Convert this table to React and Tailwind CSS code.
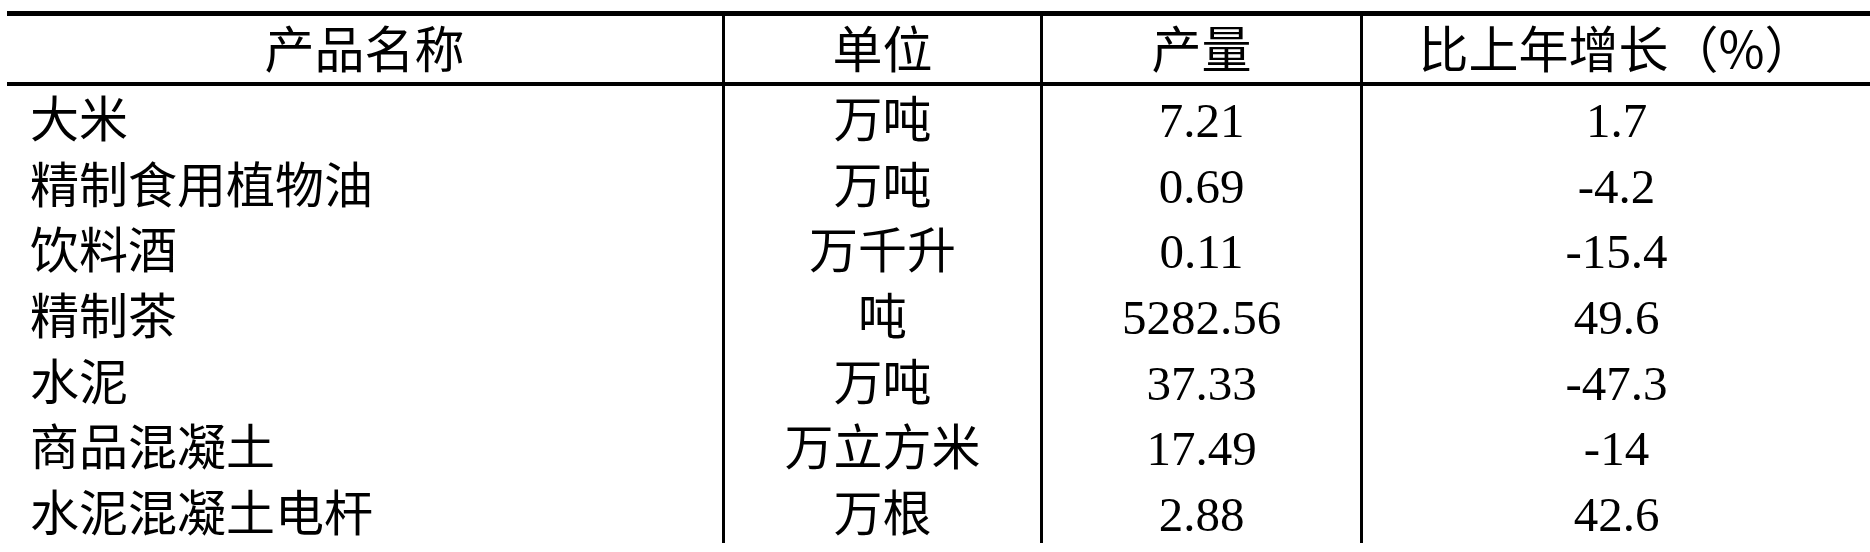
import React from "react";

const rows = [
  ["大米", "万吨", "7.21", "1.7"],
  ["精制食用植物油", "万吨", "0.69", "-4.2"],
  ["饮料酒", "万千升", "0.11", "-15.4"],
  ["精制茶", "吨", "5282.56", "49.6"],
  ["水泥", "万吨", "37.33", "-47.3"],
  ["商品混凝土", "万立方米", "17.49", "-14"],
  ["水泥混凝土电杆", "万根", "2.88", "42.6"],
];

const headers = ["产品名称", "单位", "产量", "比上年增长（%）"];

export default function App() {
  const colClass = [
    "w-[715px]",
    "w-[318px] border-l-[3px] border-black",
    "w-[320px] border-l-[3px] border-black",
    "flex-1 border-l-[3px] border-black",
  ];
  return (
    <div className="w-[1870px] h-[552px] bg-white text-black overflow-hidden">
      <div className="ml-[7px] mt-[11px] border-t-[5px] border-black">
        <div className="flex h-[70px] border-b-[4px] border-black font-['Noto_Sans_CJK_SC',sans-serif] text-[50px] leading-[61px]">
          {headers.map((h, i) => (
            <div key={i} className={`${colClass[i]} h-[66px] text-center whitespace-nowrap`}>
              {h}
            </div>
          ))}
        </div>
        <div className="flex h-[457px] font-['Liberation_Serif','Noto_Sans_CJK_SC',serif] text-[49px] leading-[62px]">
          {[0, 1, 2, 3].map((c) => (
            <div key={c} className={`${colClass[c]} h-[457px]`}>
              {rows.map((r, ri) => (
                <div
                  key={ri}
                  className={`h-[65.67px] pt-[4px] whitespace-nowrap ${c === 0 ? "pl-[23px] text-left" : "text-center"}`}
                >
                  {r[c]}
                </div>
              ))}
            </div>
          ))}
        </div>
      </div>
    </div>
  );
}
